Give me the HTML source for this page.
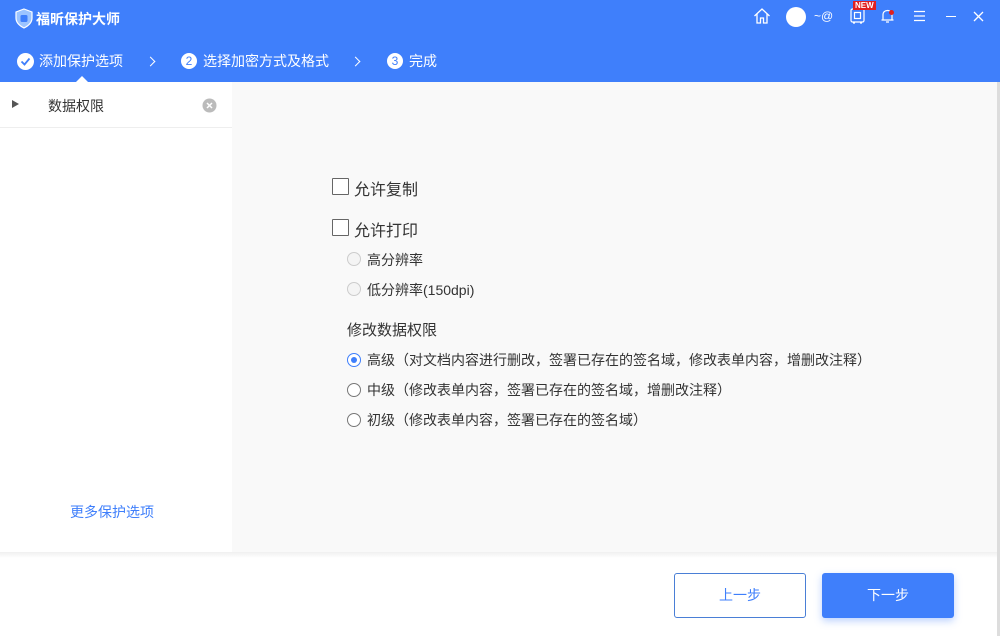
<!DOCTYPE html>
<html><head><meta charset="utf-8"><style>
*{margin:0;padding:0;box-sizing:border-box}
body{width:1000px;height:636px;overflow:hidden;position:relative;background:#fff;font-family:"Liberation Sans","Noto Sans CJK SC",sans-serif;color:#333}
.hdr{position:absolute;left:0;top:0;width:1000px;height:82px;background:#3f7ffb;color:#fff}
.abs{position:absolute}
.step{position:absolute;top:52px;font-size:14px;color:#fff;line-height:18px}
.circ{display:inline-block;width:16px;height:16px;border-radius:50%;background:#fff;color:#3f7ffb;font-size:12px;text-align:center;line-height:16px;vertical-align:top;margin-right:6px;margin-top:1px}
.chev{position:absolute;top:58px;width:7px;height:7px;border-right:1.3px solid #fff;border-top:1.3px solid #fff;transform:rotate(45deg)}
.left{position:absolute;left:0;top:82px;width:232px;height:470px;background:#fff}
.main{position:absolute;left:232px;top:82px;width:765px;height:470px;background:#f9f9f9}
.cb{position:absolute;width:17px;height:17px;border:1px solid #666;background:#fff;border-radius:1px}
.rd{position:absolute;width:14px;height:14px;border-radius:50%;border:1px solid #777;background:#fff}
.t{position:absolute;white-space:nowrap}
</style></head><body>
<div class="hdr">
 <svg class="abs" style="left:15px;top:8px" width="18" height="21" viewBox="0 0 18 21"><path d="M9 1 L17 4 V10 C17 15 13 18 9 20 C5 18 1 15 1 10 V4Z" fill="#9cc4ff" stroke="#fff" stroke-width="1.2"/><rect x="5.5" y="7" width="7" height="7" rx="1.5" fill="#3f7ffb"/></svg>
 <div class="t" style="left:36px;top:9px;font-size:14px;font-weight:bold">福昕保护大师</div>
 <svg class="abs" style="left:753px;top:7px" width="18" height="18" viewBox="0 0 18 18" fill="none" stroke="#fff" stroke-width="1.3"><path d="M1.5 9 L9 2 L16.5 9 M4 7 V16 H7.5 V11 H10.5 V16 H14 V7"/></svg>
 <div class="abs" style="left:786px;top:7px;width:20px;height:20px;border-radius:50%;background:#fff"></div>
 <div class="t" style="left:814px;top:9px;font-size:12px">~@</div>
 <svg class="abs" style="left:850px;top:8px" width="15" height="16" viewBox="0 0 15 16" fill="none" stroke="#fff" stroke-width="1.2"><rect x="1" y="1" width="13" height="13" rx="1.5"/><rect x="4.5" y="4.5" width="6" height="6"/><path d="M3 15h2M10 15h2"/></svg>
 <div class="t" style="left:853px;top:1px;background:#e02020;color:#fff;font-size:8px;line-height:9px;padding:0 2px;font-weight:bold">NEW</div>
 <svg class="abs" style="left:880px;top:8px" width="15" height="16" viewBox="0 0 15 16" fill="none" stroke="#fff" stroke-width="1.2"><path d="M3 12 V7 C3 4 5 2.5 7.5 2.5 C10 2.5 12 4 12 7 V12 H1.5 H13.5 M6 14h3"/></svg>
 <div class="abs" style="left:889px;top:10px;width:5px;height:5px;border-radius:50%;background:#e02020"></div>
 <svg class="abs" style="left:913px;top:10px" width="13" height="12" stroke="#fff" stroke-width="1.2"><path d="M1 1.5h11M1 6h11M1 10.5h11"/></svg>
 <div class="abs" style="left:946px;top:16px;width:10px;height:1.3px;background:#fff"></div>
 <svg class="abs" style="left:973px;top:11px" width="11" height="11" stroke="#fff" stroke-width="1.3"><path d="M1 1L10 10M10 1L1 10"/></svg>
 <svg class="abs" style="left:17px;top:53px" width="17" height="17"><circle cx="8.5" cy="8.5" r="8.5" fill="#fff"/><path d="M4.5 8.5 L7.5 11.5 L12.5 5.5" fill="none" stroke="#3f7ffb" stroke-width="1.8"/></svg>
 <div class="step" style="left:39px">添加保护选项</div>
 <div class="chev" style="left:147px"></div>
 <div class="step" style="left:181px"><span class="circ">2</span>选择加密方式及格式</div>
 <div class="chev" style="left:352px"></div>
 <div class="step" style="left:387px"><span class="circ">3</span>完成</div>
 <div class="abs" style="left:76px;top:76px;width:0;height:0;border-left:6px solid transparent;border-right:6px solid transparent;border-bottom:6px solid #fff"></div>
</div>
<div class="left">
 <div class="abs" style="left:12px;top:18px;width:0;height:0;border-top:4px solid transparent;border-bottom:4px solid transparent;border-left:7px solid #555"></div>
 <div class="t" style="left:48px;top:14px;font-size:14px;color:#333">数据权限</div>
 <svg class="abs" style="left:202px;top:16px" width="15" height="15"><circle cx="7.5" cy="7.5" r="7" fill="#bbb"/><path d="M5 5L10 10M10 5L5 10" stroke="#fff" stroke-width="1.5"/></svg>
 <div class="abs" style="left:0;top:45px;width:232px;height:1px;background:#eee"></div>
 <div class="t" style="left:70px;top:420px;font-size:14px;color:#3f7ffb">更多保护选项</div>
</div>
<div class="main">
 <div class="cb" style="left:100px;top:96px"></div>
 <div class="t" style="left:122px;top:94px;font-size:16px">允许复制</div>
 <div class="cb" style="left:100px;top:137px"></div>
 <div class="t" style="left:122px;top:135px;font-size:16px">允许打印</div>
 <div class="rd" style="left:115px;top:170px;border-color:#ccc;background:#f4f4f4"></div>
 <div class="t" style="left:135px;top:168px;font-size:14px">高分辨率</div>
 <div class="rd" style="left:115px;top:200px;border-color:#ccc;background:#f4f4f4"></div>
 <div class="t" style="left:135px;top:198px;font-size:14px">低分辨率(150dpi)</div>
 <div class="t" style="left:115px;top:237px;font-size:15px">修改数据权限</div>
 <div class="rd" style="left:115px;top:271px;border-color:#3f7ffb"><div class="abs" style="left:3px;top:3px;width:6px;height:6px;border-radius:50%;background:#3f7ffb"></div></div>
 <div class="t" style="left:135px;top:268px;font-size:14px">高级（对文档内容进行删改，签署已存在的签名域，修改表单内容，增删改注释）</div>
 <div class="rd" style="left:115px;top:301px"></div>
 <div class="t" style="left:135px;top:298px;font-size:14px">中级（修改表单内容，签署已存在的签名域，增删改注释）</div>
 <div class="rd" style="left:115px;top:331px"></div>
 <div class="t" style="left:135px;top:328px;font-size:14px">初级（修改表单内容，签署已存在的签名域）</div>
</div>
<div class="abs" style="left:997px;top:82px;width:3px;height:554px;background:#ddd"></div>
<div class="abs" style="left:0;top:552px;width:997px;height:6px;background:linear-gradient(#f0f0f0,#fff)"></div>
<div class="abs" style="left:674px;top:573px;width:132px;height:45px;border:1px solid #4a7fd6;border-radius:3px;background:#fff;color:#3f7ffb;font-size:14px;text-align:center;line-height:43px">上一步</div>
<div class="abs" style="left:822px;top:573px;width:132px;height:45px;border-radius:3px;background:#3f7ffb;color:#fff;font-size:14px;text-align:center;line-height:45px;box-shadow:0 3px 8px rgba(63,127,251,.35)">下一步</div>
</body></html>
